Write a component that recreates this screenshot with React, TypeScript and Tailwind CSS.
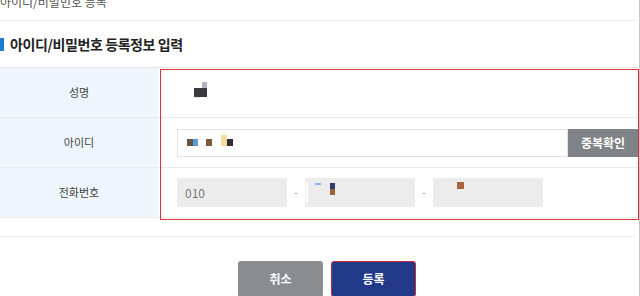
import React from 'react';

const font = { fontFamily: '"Noto Sans CJK KR", "Noto Sans", sans-serif' };

function Label({ children }: { children: React.ReactNode }) {
    return (
        <div className="w-[158px] shrink-0 bg-[#eef5fc] flex items-center justify-center text-[11px] text-[#444]">
            {children}
        </div>
    );
}

export default function App() {
    return (
        <div className="w-[640px] h-[296px] overflow-hidden bg-white relative" style={font}>
            {/* breadcrumb */}
            <div className="h-[21px] border-b border-[#ececec] mr-[4px] overflow-hidden">
                <div className="relative -top-[6px] text-[12px] leading-[16px] text-[#555]">아이디/비밀번호 등록</div>
            </div>

            {/* section heading */}
            <div className="h-[46px] flex items-center gap-[6px]">
                <span className="w-[4px] h-[13px] bg-[#1d7bd0]" />
                <h2 className="text-[14px] font-bold text-[#222] tracking-[-0.4px]">아이디/비밀번호 등록정보 입력</h2>
            </div>

            {/* form table */}
            <div className="border-t border-[#e2e6ea] mr-[2px]">
                <div className="flex h-[50px] border-b border-[#e8eaec]">
                    <Label>성명</Label>
                    <div className="flex-1 relative">
                        <span className="absolute left-[36px] top-[21px] w-[6px] h-[9px] bg-[#e6e6ea]" />
                        <span className="absolute left-[36px] top-[20px] w-[13px] h-[9px] bg-[#3a3a3e]" />
                        <span className="absolute left-[44px] top-[14px] w-[5px] h-[6px] bg-[#b3b0c6]" />
                    </div>
                </div>
                <div className="flex h-[50px] border-b border-[#e8eaec]">
                    <Label>아이디</Label>
                    <div className="flex-1 flex items-center pl-[19px]">
                        <div className="w-[391px] h-[28px] border border-[#e3e3e3] bg-white flex items-center pl-[9px]">
                            <span className="w-[6px] h-[7px] bg-[#6a5242]" />
                            <span className="w-[5px] h-[7px] bg-[#5a9ad8]" />
                            <span className="w-[6px] h-[7px] bg-[#7b5a3d] ml-[8px]" />
                            <span className="w-[6px] h-[11px] bg-[#f6dc9c] ml-[9px] -mt-[4px]" />
                            <span className="w-[6px] h-[7px] bg-[#2e2e30]" />
                        </div>
                        <button className="w-[70px] h-[28px] bg-[#7f8387] text-white text-[12px] font-bold">중복확인</button>
                    </div>
                </div>
                <div className="flex h-[50px] border-b border-[#e8eaec]">
                    <Label>전화번호</Label>
                    <div className="flex-1 flex items-center pl-[19px] text-[#999] text-[11px]">
                        <div className="w-[110px] h-[29px] bg-[#ececec] flex items-center pl-[8px] text-[12px] text-[#777]">010</div>
                        <span className="w-[18px] text-center">-</span>
                        <div className="w-[110px] h-[29px] bg-[#ececec] relative">
                            <span className="absolute left-[1px] top-[4px] w-[2px] h-[21px] bg-white" />
                            <span className="absolute left-[10px] top-[5px] w-[6px] h-[2px] bg-[#8fb4e0]" />
                            <span className="absolute left-[25px] top-[5px] w-[5px] h-[6px] bg-[#2e3a70]" />
                            <span className="absolute left-[25px] top-[11px] w-[5px] h-[6px] bg-[#a0603c]" />
                        </div>
                        <span className="w-[18px] text-center">-</span>
                        <div className="w-[110px] h-[29px] bg-[#ececec] relative">
                            <span className="absolute left-[24px] top-[4px] w-[7px] h-[7px] bg-[#a9633c]" />
                        </div>
                    </div>
                </div>
            </div>

            {/* divider */}
            <div className="mt-[18px] h-px bg-[#ececec] mr-[5px]" />

            {/* buttons */}
            <div className="mt-[24px] flex justify-center gap-[8px] pl-[14px]">
                <button className="w-[85px] h-[36px] rounded-[3px] bg-[#898d90] text-white text-[12px] font-bold">취소</button>
                <button className="w-[85px] h-[36px] rounded-[3px] bg-[#22398a] text-white text-[12px] font-bold border border-[#d0283a]">등록</button>
            </div>

            {/* annotation box */}
            <div className="absolute left-[160px] top-[69px] w-[479px] h-[151px] border border-[#e0323c] pointer-events-none" />
            {/* right edge line */}
            <div className="absolute right-0 top-0 w-px h-full bg-[#c8c8c8]" />
        </div>
    );
}
